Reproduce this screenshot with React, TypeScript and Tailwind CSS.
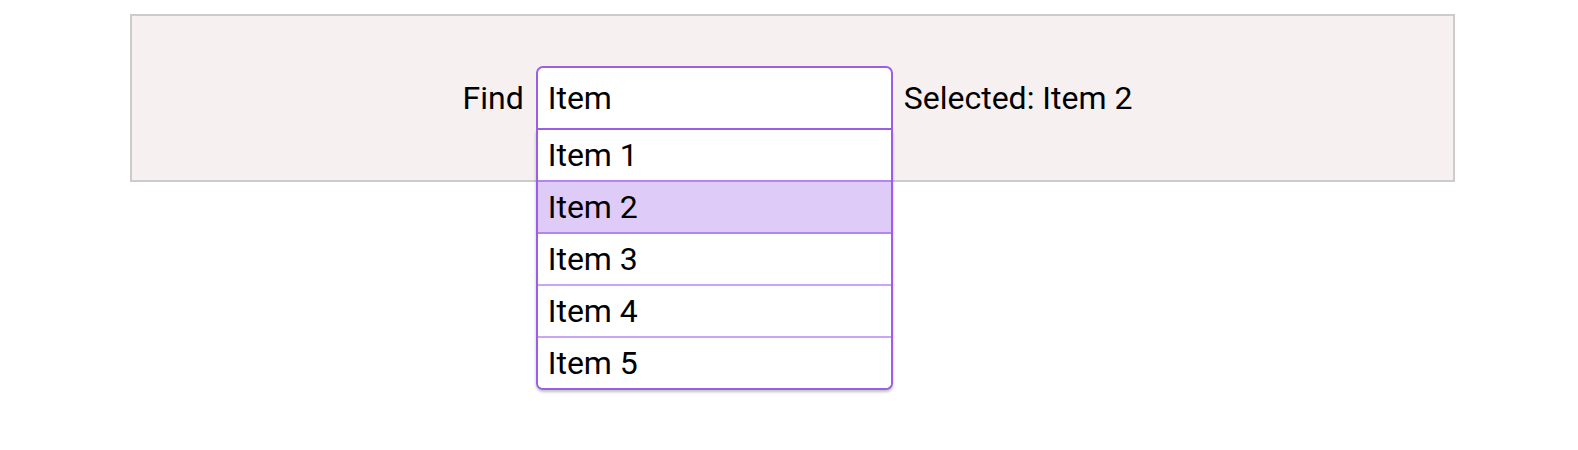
import { useState } from "react";

const items = ["Item 1", "Item 2", "Item 3", "Item 4", "Item 5"];

const App = () => {
  const [query, setQuery] = useState("Item");
  const [selected, setSelected] = useState("Item 2");

  return (
    <div className="min-h-screen bg-white pt-[14px] font-['Roboto',sans-serif] text-[32px] text-black">
      <div className="ml-[130px] flex h-[168px] w-[1325px] items-center justify-center border-2 border-[#cccccc] bg-[#f6f0f0] pl-[10px]">
        <label htmlFor="find" className="mr-[12px]">
          Find
        </label>
        <div className="relative w-[357px]">
          <input
            id="find"
            value={query}
            onChange={(e) => setQuery(e.target.value)}
            className="h-[64px] w-full rounded-t-[7px] border-2 border-[#9b5fe6] bg-white px-[10px] outline-none"
          />
          <ul className="absolute left-0 right-0 top-full z-10 overflow-hidden rounded-b-[7px] border-2 border-t-0 border-[#9b5fe6] bg-white shadow-[0_2px_3px_rgba(0,0,0,0.25)]">
            {items.map((item, i) => (
              <li
                key={item}
                onClick={() => setSelected(item)}
                className={`flex cursor-pointer items-center px-[10px] ${
                  i === 0 ? "h-[50px]" : i <= 2 ? "h-[52px] border-t-2 border-[#b286ee]" : "h-[52px] border-t-2 border-[#c9a6f4]"
                } ${item === selected ? "bg-[#dfcbf7]" : "bg-white"}`}
              >
                {item}
              </li>
            ))}
          </ul>
        </div>
        <span className="ml-[11px]">Selected: {selected}</span>
      </div>
    </div>
  );
};

export default App;
